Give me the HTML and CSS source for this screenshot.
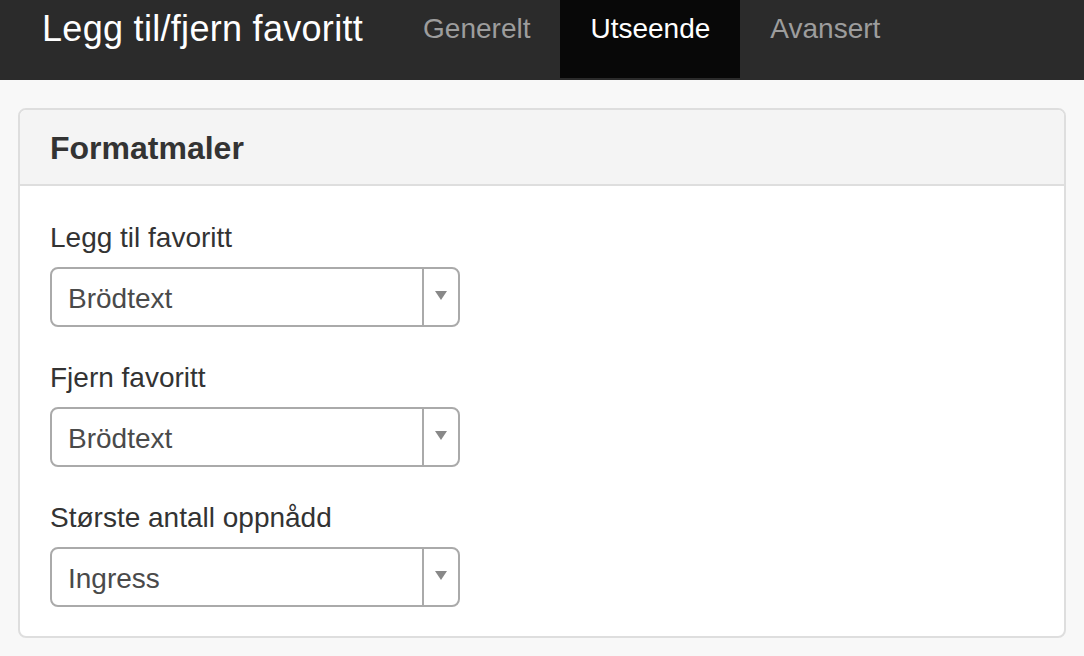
FILE: index.html
```html
<!DOCTYPE html>
<html lang="no">
<head>
<meta charset="utf-8">
<title>Legg til/fjern favoritt</title>
<link rel="stylesheet" href="styles.css">
</head>
<body>
<header class="navbar">
  <div class="brand">Legg til/fjern favoritt</div>
  <nav class="tabs">
    <a class="tab">Generelt</a>
    <a class="tab active">Utseende</a>
    <a class="tab">Avansert</a>
  </nav>
</header>
<main class="content">
  <section class="panel">
    <div class="panel-heading">Formatmaler</div>
    <div class="panel-body">
      <div class="form-group">
        <div class="label">Legg til favoritt</div>
        <div class="select">
          <span class="select-value">Brödtext</span>
          <span class="select-arrow"><span class="triangle"></span></span>
        </div>
      </div>
      <div class="form-group">
        <div class="label">Fjern favoritt</div>
        <div class="select">
          <span class="select-value">Brödtext</span>
          <span class="select-arrow"><span class="triangle"></span></span>
        </div>
      </div>
      <div class="form-group">
        <div class="label">Største antall oppnådd</div>
        <div class="select">
          <span class="select-value">Ingress</span>
          <span class="select-arrow"><span class="triangle"></span></span>
        </div>
      </div>
    </div>
  </section>
</main>
</body>
</html>
```
FILE: styles.css
```css
* { box-sizing: border-box; }

body {
  margin: 0;
  background: #f8f8f8;
  font-family: "Liberation Sans", Arial, Helvetica, sans-serif;
  color: #333;
}

.navbar {
  display: flex;
  align-items: flex-start;
  height: 80px;
  background: #2b2b2b;
}

.brand {
  margin: 0 31px 0 42px;
  padding-top: 9px;
  font-size: 36px;
  line-height: 40px;
  letter-spacing: 0.3px;
  color: #fff;
  white-space: nowrap;
}

.tabs {
  display: flex;
}

.tab {
  display: block;
  height: 78px;
  padding: 9px 30px 0;
  font-size: 28px;
  line-height: 40px;
  color: #9d9d9d;
  text-decoration: none;
}

.tab:first-child {
  margin-left: -1px;
}

.tab.active {
  background: #080808;
  color: #fff;
}

.content {
  padding: 28px 18px 0;
}

.panel {
  background: #fff;
  border: 2px solid #dedede;
  border-radius: 8px;
  overflow: hidden;
}

.panel-heading {
  background: #f4f4f4;
  border-bottom: 2px solid #dedede;
  padding: 20px 30px 18px;
  font-size: 32px;
  line-height: 36px;
  font-weight: bold;
  color: #333;
}

.panel-body {
  padding: 30px 30px 29px;
  display: flex;
  flex-direction: column;
  gap: 29px;
}

.label {
  font-size: 28px;
  line-height: 40px;
  color: #333;
  padding-top: 2px;
  margin-bottom: 9px;
}

.select {
  display: flex;
  width: 410px;
  height: 60px;
  border: 2px solid #aaa;
  border-radius: 8px;
  background: #fff;
}

.select-value {
  flex: 1;
  padding: 4px 0 0 16px;
  font-size: 28px;
  line-height: 52px;
  color: #4a4a4a;
}

.select-arrow {
  width: 36px;
  border-left: 2px solid #aaa;
  display: flex;
  justify-content: center;
  padding-top: 22px;
}

.triangle {
  width: 0;
  height: 0;
  border-left: 6px solid transparent;
  border-right: 6px solid transparent;
  border-top: 9px solid #888;
}
```
